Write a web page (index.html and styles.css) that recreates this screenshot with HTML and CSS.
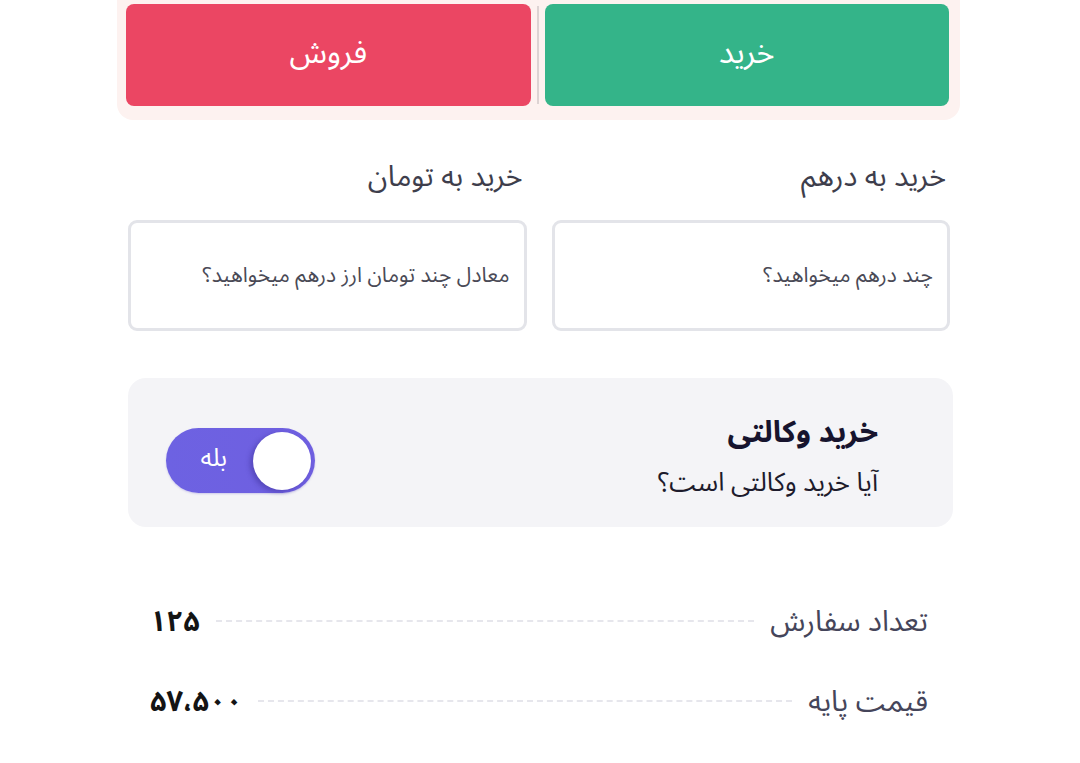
FILE: index.html
```html
<!DOCTYPE html>
<html lang="fa" dir="rtl">
<head>
<meta charset="utf-8">
<title>خرید</title>
<link rel="stylesheet" href="styles.css">
</head>
<body>
<div class="page">
  <div class="trade-switch">
    <button class="trade-btn buy">خرید</button>
    <span class="divider"></span>
    <button class="trade-btn sell">فروش</button>
  </div>

  <div class="fields">
    <div class="field">
      <label class="field-label">خرید به درهم</label>
      <div class="input-box"><span class="placeholder">چند درهم میخواهید؟</span></div>
    </div>
    <div class="field">
      <label class="field-label">خرید به تومان</label>
      <div class="input-box"><span class="placeholder">معادل چند تومان ارز درهم میخواهید؟</span></div>
    </div>
  </div>

  <div class="proxy-card">
    <div class="proxy-text">
      <div class="proxy-title">خرید وکالتی</div>
      <div class="proxy-sub">آیا خرید وکالتی است؟</div>
    </div>
    <div class="toggle">
      <span class="knob"></span>
      <span class="toggle-label">بله</span>
    </div>
  </div>

  <div class="summary">
    <div class="row">
      <span class="row-label">تعداد سفارش</span>
      <span class="dots"></span>
      <span class="row-value">۱۲۵</span>
    </div>
    <div class="row">
      <span class="row-label">قیمت پایه</span>
      <span class="dots"></span>
      <span class="row-value">۵۷،۵۰۰</span>
    </div>
  </div>
</div>
</body>
</html>
```

FILE: styles.css
```css
* { box-sizing: border-box; }
html, body { margin: 0; padding: 0; background: #ffffff; }
body {
  font-family: "Noto Sans Arabic", "DejaVu Sans", sans-serif;
  direction: rtl;
  color: #3d3d4b;
  width: 1080px;
  height: 763px;
  overflow: hidden;
}
.page {
  width: 1080px;
  display: flex;
  flex-direction: column;
}
.trade-switch {
  margin: -8px 120px 0 117px;
  width: 843px;
  height: 128px;
  background: #fdf2f0;
  border-radius: 0 0 16px 16px;
  padding: 12px 11px 14px 9px;
  display: flex;
  align-items: stretch;
  gap: 6px;
}
.trade-btn {
  flex: 1;
  border: none;
  border-radius: 8px;
  color: #ffffff;
  font-family: inherit;
  font-size: 31px;
  padding: 0 0 4px;
  cursor: pointer;
}
.buy { background: #34b489; }
.sell { background: #eb4663; }
.divider {
  width: 2px;
  margin: 2px 0;
  background: #ddd3d3;
}
.fields {
  margin: 34px 130px 0 128px;
  display: flex;
  gap: 25px;
}
.field {
  flex: 1;
  display: flex;
  flex-direction: column;
}
.field-label {
  font-size: 29px;
  color: #3e3e4c;
  padding-right: 4px;
  height: 46px;
  line-height: 46px;
  margin-bottom: 20px;
}
.input-box {
  height: 111px;
  border: 3px solid #e3e4e9;
  border-radius: 9px;
  display: flex;
  align-items: center;
  padding: 0 14px 2px;
}
.placeholder {
  font-size: 21px;
  color: #4a4a56;
}
.proxy-card {
  margin: 47px 127px 0 128px;
  height: 149px;
  background: #f4f4f7;
  border-radius: 18px;
  display: flex;
  align-items: center;
  justify-content: space-between;
  padding: 0 75px 0 38px;
}
.proxy-text {
  display: flex;
  flex-direction: column;
  gap: 2px;
  padding-top: 10px;
}
.proxy-title {
  font-size: 30px;
  line-height: 48px;
  font-weight: bold;
  color: #17142e;
}
.proxy-sub {
  font-size: 26px;
  line-height: 48px;
  color: #1d1b2c;
}
.toggle {
  width: 149px;
  height: 65px;
  border-radius: 33px;
  background: linear-gradient(90deg, #6d62e2 0%, #6f5fe0 100%);
  display: flex;
  align-items: center;
  padding: 0 4px;
  margin-top: 16px;
  gap: 26px;
  box-shadow: 0 1px 2px rgba(90, 80, 200, 0.25);
}
.knob {
  width: 58px;
  height: 58px;
  border-radius: 50%;
  background: #ffffff;
  box-shadow: -3px 2px 5px rgba(40, 30, 120, 0.35);
}
.toggle-label {
  color: #ffffff;
  font-size: 25px;
  padding-bottom: 6px;
}
.summary {
  margin: 74px 152px 0 150px;
  display: flex;
  flex-direction: column;
  gap: 40px;
}
.row {
  height: 40px;
  display: flex;
  align-items: center;
  gap: 16px;
}
.row-label {
  font-size: 29px;
  color: #45455a;
}
.dots {
  flex: 1;
  border-top: 2px dashed #e6e6ec;
  height: 0;
}
.row-value {
  font-size: 29px;
  font-weight: bold;
  color: #141414;
}
```
